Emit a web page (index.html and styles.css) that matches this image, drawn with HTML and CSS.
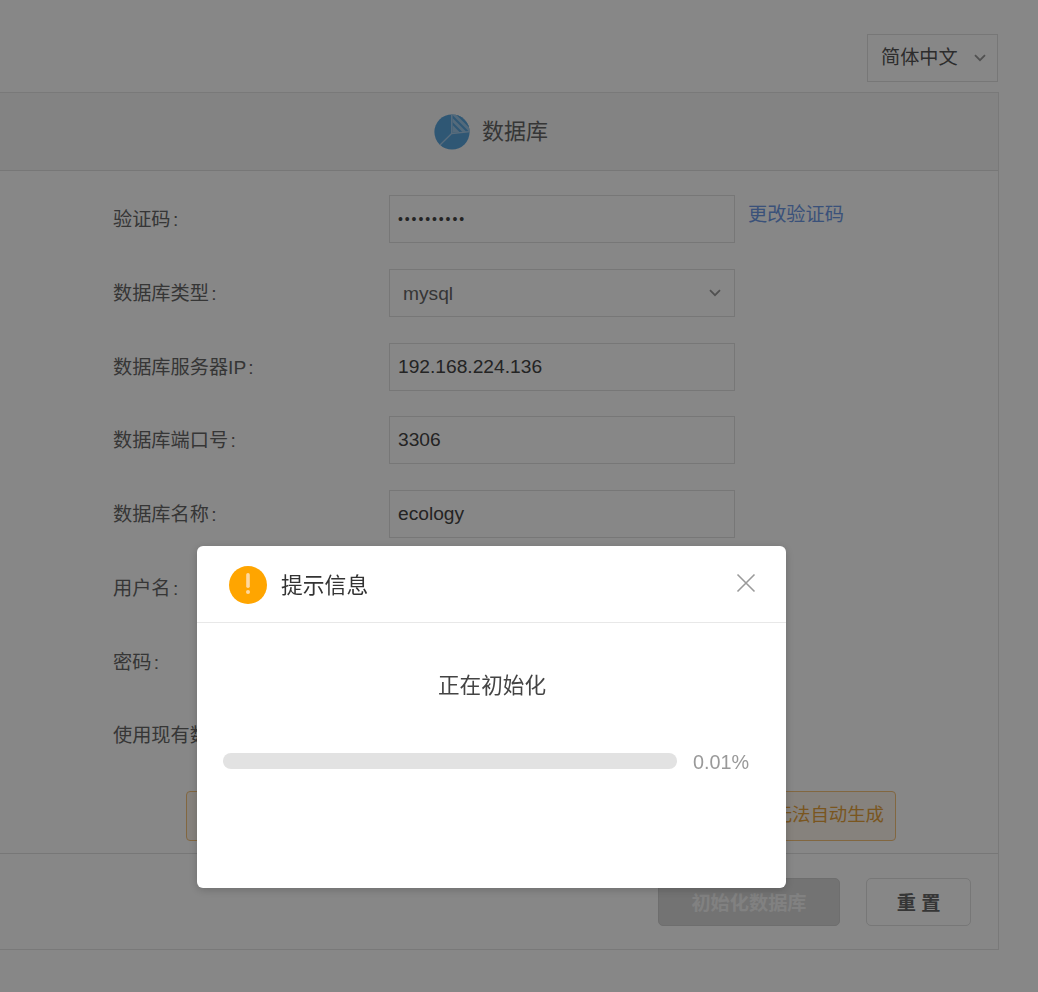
FILE: index.html
```html
<!DOCTYPE html>
<html lang="zh-CN">
<head>
<meta charset="utf-8">
<title>数据库初始化</title>
<link rel="stylesheet" href="styles.css">
</head>
<body>
<div class="page">
  <div class="topbar">
    <div class="lang"><span>简体中文</span><svg class="chev" width="12" height="8" viewBox="0 0 12 8"><path d="M1 1.2 6 6.2 11 1.2" fill="none" stroke="#999" stroke-width="1.8"/></svg></div>
  </div>
  <div class="panel">
    <div class="panel-head">
      <svg class="pie" width="36" height="36" viewBox="0 0 36 36">
        <defs><clipPath id="wedge"><path d="M18.500 0H36V17.500L18.500 18.500Z"/></clipPath><clipPath id="disc"><circle cx="18" cy="18" r="17.600"/></clipPath></defs>
        <g clip-path="url(#disc)">
          <rect width="36" height="36" fill="#5aa5dc"/>
          <g clip-path="url(#wedge)">
            <rect width="36" height="36" fill="#9fc9e8"/>
            <path d="M14.500 5.500 30 21M18 2 34 18M21.500-1.500 38 15M25-5 42 12" stroke="#5aa5dc" stroke-width="2.200" fill="none"/>
          </g>
          <path d="M17.700 0V19.500L5 32M17.700 19.500 36 17.700" fill="none" stroke="#a8cdea" stroke-width="1.300"/>
        </g>
      </svg>
      <span class="head-text">数据库</span>
    </div>
    <div class="form">
      <div class="row"><label>验证码 :</label><div class="input pw">••••••••••</div><a class="link">更改验证码</a></div>
      <div class="row"><label>数据库类型 :</label><div class="input select"><span>mysql</span><svg width="12" height="8" viewBox="0 0 12 8"><path d="M1 1.2 6 6.2 11 1.2" fill="none" stroke="#999" stroke-width="1.8"/></svg></div></div>
      <div class="row"><label>数据库服务器IP :</label><div class="input">192.168.224.136</div></div>
      <div class="row"><label>数据库端口号 :</label><div class="input">3306</div></div>
      <div class="row"><label>数据库名称 :</label><div class="input">ecology</div></div>
      <div class="row"><label>用户名 :</label><div class="input"></div></div>
      <div class="row"><label>密码 :</label><div class="input"></div></div>
      <div class="row"><label>使用现有数据库 :</label></div>
      <div class="notice">提示：请确认数据库已创建并且用户具有权限，否则数据库将无法自动生成</div>
    </div>
    <div class="panel-foot">
      <button class="btn primary">初始化数据库</button>
      <button class="btn ghost">重 置</button>
    </div>
  </div>
</div>
<div class="overlay"></div>
<div class="dialog">
  <div class="dialog-head">
    <svg class="warn" width="40" height="40" viewBox="0 0 40 40"><circle cx="20" cy="20" r="19" fill="#ffa500"/><rect x="18.200" y="8" width="3.600" height="15" rx="1.800" fill="#ffd9a0"/><circle cx="20" cy="27" r="2" fill="#ffd9a0"/></svg>
    <span class="dialog-title">提示信息</span>
    <svg class="close" width="20" height="20" viewBox="0 0 20 20"><path d="M1.500 1.500 18.500 18.500M18.500 1.500 1.500 18.500" stroke="#9a9a9a" stroke-width="1.600"/></svg>
  </div>
  <div class="dialog-body">
    <div class="status">正在初始化</div>
    <div class="progress"><div class="track"></div><span class="pct">0.01%</span></div>
  </div>
</div>
</body>
</html>
```
FILE: styles.css
```css
* { box-sizing: border-box; }
html, body { margin: 0; height: 100%; }
body {
  background: #fff;
  color: #444;
  font-family: "Liberation Sans", "Noto Sans CJK SC", sans-serif;
  font-size: 18px;
  overflow: hidden;
}
.page { padding-top: 34px; height: 992px; }
.topbar { display: flex; justify-content: flex-end; padding-right: 40px; }
.lang {
  width: 131px; height: 48px;
  border: 1px solid #e0e0e0;
  display: flex; align-items: center; justify-content: space-between;
  padding: 0 11px 0 13px;
  font-size: 19.200px;
  color: #555;
}
.lang span { margin-bottom: 4px; }
.panel {
  margin: 10px 39px 0 -20px;
  height: 858px;
  border: 1px solid #e4e4e4;
  display: flex; flex-direction: column;
}
.panel-head {
  height: 78px;
  background: #f7f7f7;
  border-bottom: 1px solid #e0e0e0;
  display: flex; align-items: center; justify-content: center; gap: 12px;
  padding-left: 3px;
  font-size: 22px;
  color: #666;
}
.head-text { margin-bottom: 6px; }
.form { flex: 1; padding: 24px 0 0 132px; }
.row { display: flex; height: 73.750px; align-items: flex-start; }
.row label { width: 276px; line-height: 50px; color: #666; font-size: 19.200px; word-spacing: -3px; }
.input {
  width: 346px; height: 48px;
  border: 1px solid #e0e0e0;
  padding: 0 8px;
  line-height: 46px;
  font-size: 19.200px;
}
.pw { letter-spacing: 1.900px; font-size: 14px; }
.select { display: flex; align-items: center; justify-content: space-between; padding: 0 13px; color: #666; }
.select span { margin-top: 2px; }
.link { margin: 7px 0 0 13px; color: #6f9ae6; font-size: 19.200px; line-height: 26px; }
.notice {
  margin: 6px 0 0 73px;
  width: 710px; height: 50px;
  border: 1px solid #f5c27a;
  border-radius: 4px;
  background: #fdf6ec;
  color: #e6a23c;
  text-align: right;
  padding-right: 11px;
  line-height: 46px;
  font-size: 18.400px;
  white-space: nowrap;
  overflow: hidden;
}
.panel-foot {
  height: 96px;
  border-top: 1px solid #e0e0e0;
  display: flex; justify-content: flex-end; gap: 26px;
  padding: 24px 27px 0 0;
}
.btn {
  height: 48px;
  border-radius: 5px;
  font-family: inherit;
  font-size: 19.200px;
  font-weight: 700;
}
.primary { width: 182px; background: #d9d9d9; border: 1px solid #d0d0d0; color: #f4f4f4; }
.ghost { width: 105px; background: #fff; border: 1px solid #e0e0e0; color: #666; }
.overlay { position: fixed; inset: 0; background: rgba(0, 0, 0, .47); }
.dialog {
  position: fixed; left: 197px; top: 546px;
  width: 589px; height: 342px;
  background: #fff;
  border-radius: 6px;
  box-shadow: 0 2px 10px rgba(0, 0, 0, .2);
}
.dialog-head {
  height: 77px;
  border-bottom: 1px solid #e8e8e8;
  display: flex; align-items: center;
  padding: 2px 30px 0 31px;
}
.warn { margin-right: 13px; }
.dialog-title { font-size: 21.800px; flex: 1; color: #333; margin-bottom: 3px; }
.close { margin-bottom: 5px; }
.dialog-body { padding-top: 46px; }
.status { text-align: center; font-size: 21.600px; line-height: 34px; margin-left: 1px; }
.progress { display: flex; align-items: center; gap: 16px; margin: 45px 0 0 26px; }
.track { width: 454px; height: 16px; border-radius: 8px; background: #e2e2e2; }
.pct { color: #999; font-size: 19.800px; margin-top: 3px; }
```
